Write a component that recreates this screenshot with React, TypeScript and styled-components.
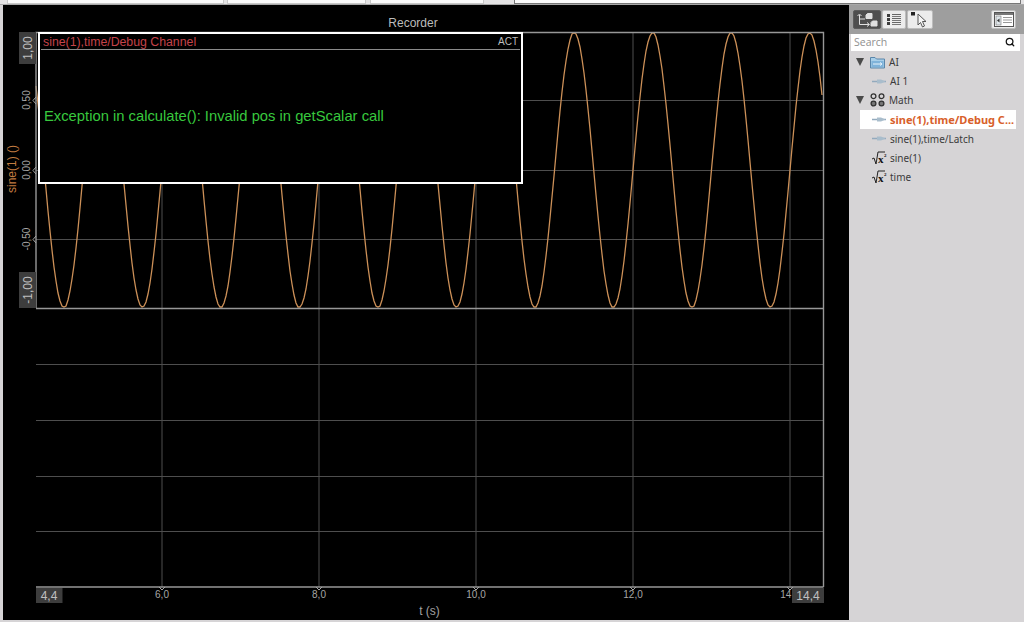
import { createGlobalStyle } from 'styled-components';
import styled from 'styled-components';
import { Search } from 'lucide-react';

const GlobalStyle = createGlobalStyle`
  html, body {
    margin: 0;
    padding: 0;
    background: #d6d4d6;
    overflow: hidden;
  }
  * { box-sizing: border-box; }
`;

const Page = styled.div`
  width: 1024px;
  height: 622px;
  display: flex;
  flex-direction: column;
  background: #d6d4d6;
  font-family: 'Liberation Sans', Arial, sans-serif;
`;

const TopStrip = styled.div`
  height: 5px;
  display: flex;
  padding-left: 7px;
  border-bottom: 1px solid #a9a9a9;
  background: #e4e3e4;
`;

const TopField = styled.div<{ $w: number; $gap: number; $dark?: boolean }>`
  width: ${p => p.$w}px;
  margin-right: ${p => p.$gap}px;
  height: 4px;
  background: #fbfbfb;
  border: 1px solid ${p => (p.$dark ? '#777' : '#c8c8c8')};
  border-top: 0;
`;

const Main = styled.div`
  flex: 1;
  display: flex;
  min-height: 0;
`;

const ChartPanel = styled.div`
  width: 846px;
  margin-left: 3px;
  margin-bottom: 2px;
  background: #000;
  display: flex;
  flex-direction: column;
`;

const ChartTitle = styled.div`
  height: 25px;
  padding: 12px 26px 0 0;
  text-align: center;
  color: #bcbcbc;
  font-size: 12px;
  line-height: 13px;
`;

const Plot = styled.div`
  position: relative;
  flex: 1;
`;

const PlotSvg = styled.svg`
  display: block;
  width: 846px;
  height: 590px;
`;

const DebugWindow = styled.div`
  position: absolute;
  left: 35px;
  top: 2px;
  width: 485px;
  height: 152px;
  border: 2px solid #fff;
  background: #000;
  display: flex;
  flex-direction: column;
  padding: 0 1px;
`;

const DebugHeader = styled.div`
  height: 16px;
  display: flex;
  justify-content: space-between;
  align-items: center;
  padding: 0 2px;
  border-bottom: 1px solid #8a8a8a;
`;

const DebugName = styled.span`
  color: #c4434a;
  font-size: 12.3px;
`;

const DebugState = styled.span`
  color: #bdbdbd;
  font-size: 10px;
`;

const DebugMessage = styled.div`
  padding: 57px 0 0 3px;
  color: #38c83e;
  font-size: 14.78px;
  line-height: 18px;
  white-space: nowrap;
`;

const Sidebar = styled.aside`
  flex: 1;
  display: flex;
  flex-direction: column;
  min-width: 0;
`;

const ToolBar = styled.div`
  height: 29px;
  background: #9e9e9e;
  display: flex;
  align-items: center;
  padding: 0 8px 0 4px;
  gap: 1px;
`;

const ToolButton = styled.div<{ $active?: boolean; $w: number; $push?: boolean }>`
  width: ${p => p.$w}px;
  height: 19px;
  border-radius: 2px;
  display: flex;
  align-items: center;
  justify-content: center;
  background: ${p => (p.$active ? '#4e4e4e' : '#ececec')};
  border: 1px solid ${p => (p.$active ? '#5c5c5c' : '#bdbdbd')};
  margin-left: ${p => (p.$push ? 'auto' : '0')};
`;

const SearchBox = styled.div`
  height: 17px;
  margin: 0 4px 0 2px;
  background: #fff;
  display: flex;
  align-items: center;
  justify-content: space-between;
  padding: 0 5px 2px 3px;
  color: #8f8f8f;
  font-family: 'Open Sans', sans-serif;
  font-size: 10.5px;
`;

const Tree = styled.ul`
  list-style: none;
  margin: 0;
  padding: 1.5px 8px 0 0;
`;

const Row = styled.li<{ $selected?: boolean }>`
  height: 19.2px;
  display: flex;
  align-items: center;
  margin-left: 11px;
  padding-left: 12px;
  gap: 3px;
  font-family: 'Noto Sans', sans-serif;
  font-size: ${p => (p.$selected ? 11 : 10)}px;
  white-space: nowrap;
  color: ${p => (p.$selected ? '#d8602a' : '#3b3b3b')};
  font-weight: ${p => (p.$selected ? 700 : 400)};
  background: ${p => (p.$selected ? '#fff' : 'transparent')};
`;

const GroupRow = styled(Row)`
  margin-left: 7px;
  padding-left: 0;
  gap: 4px;
`;

const Caret = styled.span`
  width: 0;
  height: 0;
  margin-right: 2px;
  border-left: 4px solid transparent;
  border-right: 4px solid transparent;
  border-top: 8px solid #4a4a4a;
`;

const IconSvg = styled.svg`
  flex: none;
  display: block;
`;

const X0 = 36;
const X1 = 823.5;
const TOP = 32;
const MID = 308;
const BOTTOM = 587;
const PX_PER_SEC = 78.5;
const xOf = (t: number) => 162 + (t - 6) * PX_PER_SEC;

function sinePath() {
  const pts: string[] = [];
  const amp = (MID - TOP) / 2 - 0.5;
  const cy = (MID + TOP) / 2;
  for (let x = X0; x <= X1; x += 2) {
    const t = 6 + (x - 162) / PX_PER_SEC;
    const y = Math.round(cy - Math.sin(2 * Math.PI * t) * amp);
    pts.push(`${x} ${y}`);
  }
  return 'M' + pts.join('L');
}

const VERTICALS = [6, 8, 10, 12, 14];
const UPPER_GRID = [{ y: 100, label: '0,50' }, { y: 170, label: '0,00' }, { y: 239, label: '-0,50' }];
const LOWER_GRID = [364, 420, 476, 531];
const AXIS = '#979797';
const GRID = '#4e4e4e';
const TICK = '#a6a6a6';

function Chart() {
  return (
    <PlotSvg viewBox="3 30 846 590">
      {VERTICALS.map(t => (
        <line key={t} x1={xOf(t)} x2={xOf(t)} y1={TOP} y2={BOTTOM} stroke={GRID} />
      ))}
      {UPPER_GRID.map(g => (
        <line key={g.y} x1={X0} x2={X1} y1={g.y + 0.5} y2={g.y + 0.5} stroke={GRID} />
      ))}
      {LOWER_GRID.map(y => (
        <line key={y} x1={X0} x2={X1} y1={y + 0.5} y2={y + 0.5} stroke={GRID} />
      ))}
      <path d={sinePath()} fill="none" stroke="#cc9058" strokeWidth="1.3" />
      <path
        d={`M${X0} ${MID}V${TOP + 0.5}H${X1}V${BOTTOM}M${X0} ${MID + 0.5}H${X1}M${X0} ${BOTTOM}H${X1}`}
        fill="none"
        stroke={AXIS}
        strokeWidth="1.4"
      />
      {UPPER_GRID.map(g => (
        <g key={g.label}>
          <path d={`M36 ${g.y - 3}L33 ${g.y + 0.5}L36 ${g.y + 4}`} fill="none" stroke={TICK} />
          <text
            transform={`translate(30 ${g.y}) rotate(-90)`}
            textAnchor="middle"
            fill={TICK}
            fontSize="10"
          >
            {g.label}
          </text>
        </g>
      ))}
      <rect x="19" y="32" width="17" height="32" fill="#3d3d3d" />
      <text transform="translate(32 48) rotate(-90)" textAnchor="middle" fill="#c0c0c0" fontSize="12">1,00</text>
      <rect x="19" y="272" width="17" height="36" fill="#3d3d3d" />
      <text transform="translate(32 290) rotate(-90)" textAnchor="middle" fill="#c0c0c0" fontSize="12">-1,00</text>
      <text transform="translate(16 169) rotate(-90)" textAnchor="middle" fill="#c07c40" fontSize="12">sine(1) ()</text>

      {VERTICALS.map(t => (
        <g key={t}>
          <path d={`M${xOf(t) - 3} 587L${xOf(t)} 590L${xOf(t) + 3} 587`} fill="none" stroke={TICK} />
          <text x={xOf(t)} y="598" textAnchor="middle" fill={TICK} fontSize="10">
            {String(t) + ',0'}
          </text>
        </g>
      ))}
      <rect x="36" y="588" width="26.5" height="15" fill="#3d3d3d" />
      <text x="49" y="600" textAnchor="middle" fill="#c0c0c0" fontSize="12">4,4</text>
      <rect x="792" y="588" width="32" height="15" fill="#3d3d3d" />
      <text x="808" y="600" textAnchor="middle" fill="#c0c0c0" fontSize="12">14,4</text>
      <text x="429.5" y="615" textAnchor="middle" fill="#a0a0a0" fontSize="12">t (s)</text>
    </PlotSvg>
  );
}

function TreeViewIcon() {
  return (
    <IconSvg width="22" height="16" viewBox="0 0 22 16" fill="none" stroke="#e0e0e0">
      <path d="M3.5 3V12.5H13M3.5 7H9" strokeWidth="1" />
      <path d="M1.5 4L3.5 2L5.5 4" strokeWidth="1" />
      <path d="M10 5V3L11.5 1.5H16V6.5H10Z" fill="#e0e0e0" />
      <path d="M15 13V10.5L16.5 9H21V14H15Z" fill="#e0e0e0" />
      <path d="M11 10.5L13.5 12.5L11 14.5" strokeWidth="1" />
    </IconSvg>
  );
}

function ListIcon() {
  return (
    <IconSvg width="16" height="14" viewBox="0 0 16 14">
      {[1, 5, 9].map(y => (
        <g key={y}>
          <rect x="1" y={y} width="3" height="3" fill="#3d3d3d" />
          <rect x="6" y={y} width="9" height="1" fill="#666" />
          <rect x="6" y={y + 2} width="9" height="1" fill="#777" />
        </g>
      ))}
    </IconSvg>
  );
}

function PointerIcon() {
  return (
    <IconSvg width="20" height="17" viewBox="0 0 20 17">
      <rect x="1" y="1" width="4" height="3.5" fill="#222" />
      <path d="M8 3V14L10.5 11.5L12.5 16L14.5 15L12.5 10.5H16Z" fill="#f4f4f4" stroke="#555" strokeWidth="1" />
    </IconSvg>
  );
}

function PanelIcon() {
  return (
    <IconSvg width="20" height="15" viewBox="0 0 20 15">
      <rect x="0.5" y="0.5" width="19" height="14" fill="#fff" stroke="#555" />
      <rect x="1" y="1" width="18" height="2" fill="#777" />
      <rect x="2" y="4" width="5" height="9" fill="#dfe6ea" stroke="#777" strokeWidth="0.6" />
      <path d="M3 8.5L5.5 6.5V10.5Z" fill="#333" />
      <path d="M9 5.5H18M9 8H18M9 10.5H18" stroke="#999" />
    </IconSvg>
  );
}

function FolderIcon() {
  return (
    <IconSvg width="15" height="13" viewBox="0 0 15 13">
      <path d="M0.5 12V1.5H5L6.5 3H14.5V12Z" fill="#a8cfe9" stroke="#5a86aa" />
      <rect x="1.5" y="5" width="12" height="6" fill="#7fb3da" />
      <path d="M3 8H12M10 6.5L12 8L10 9.5" stroke="#e9f3fa" fill="none" />
    </IconSvg>
  );
}

function ChannelIcon() {
  return (
    <IconSvg width="15" height="7" viewBox="0 0 15 7">
      <path d="M0 3.5H14" stroke="#93aabd" strokeWidth="1.5" />
      <path d="M5 1.5H9L13.5 3.5L9 5.5H5Z" fill="#a9bdcc" />
    </IconSvg>
  );
}

function MathIcon() {
  return (
    <IconSvg width="15" height="14" viewBox="0 0 15 14" fill="none" stroke="#333">
      <circle cx="3.5" cy="3.2" r="2.4" strokeWidth="1.3" />
      <circle cx="11.5" cy="3.2" r="2.4" strokeWidth="1.3" />
      <circle cx="3.5" cy="10.5" r="2.4" strokeWidth="1.3" fill="#777" />
      <circle cx="11.5" cy="10.5" r="2.4" strokeWidth="1.3" fill="#777" />
    </IconSvg>
  );
}

function SqrtIcon() {
  return (
    <IconSvg width="15" height="14" viewBox="0 0 15 14">
      <path d="M0 8L2 7L4 13L6 1H13" fill="none" stroke="#222" />
      <text x="6" y="12" fontFamily="'Liberation Serif', serif" fontWeight="700" fontSize="11" fill="#111">x</text>
      <text x="12" y="6" fontFamily="'Liberation Serif', serif" fontWeight="700" fontSize="5" fill="#111">2</text>
    </IconSvg>
  );
}

export default function App() {
  return (
    <Page>
      <GlobalStyle />
      <TopStrip>
        <TopField $w={217} $gap={3} />
        <TopField $w={139} $gap={4} />
        <TopField $w={114} $gap={30} />
        <TopField $w={507} $gap={0} $dark />
      </TopStrip>
      <Main>
        <ChartPanel>
          <ChartTitle>Recorder</ChartTitle>
          <Plot>
            <Chart />
            <DebugWindow>
              <DebugHeader>
                <DebugName>sine(1),time/Debug Channel</DebugName>
                <DebugState>ACT</DebugState>
              </DebugHeader>
              <DebugMessage>Exception in calculate(): Invalid pos in getScalar call</DebugMessage>
            </DebugWindow>
          </Plot>
        </ChartPanel>
        <Sidebar>
          <ToolBar>
            <ToolButton $active $w={28}><TreeViewIcon /></ToolButton>
            <ToolButton $w={24}><ListIcon /></ToolButton>
            <ToolButton $w={26}><PointerIcon /></ToolButton>
            <ToolButton $w={25} $push><PanelIcon /></ToolButton>
          </ToolBar>
          <SearchBox>
            Search
            <Search size={10} color="#111" strokeWidth={3} />
          </SearchBox>
          <Tree>
            <GroupRow><Caret /><FolderIcon />AI</GroupRow>
            <Row><ChannelIcon />AI 1</Row>
            <GroupRow><Caret /><MathIcon />Math</GroupRow>
            <Row $selected><ChannelIcon />sine(1),time/Debug C...</Row>
            <Row><ChannelIcon />sine(1),time/Latch</Row>
            <Row><SqrtIcon />sine(1)</Row>
            <Row><SqrtIcon />time</Row>
          </Tree>
        </Sidebar>
      </Main>
    </Page>
  );
}
